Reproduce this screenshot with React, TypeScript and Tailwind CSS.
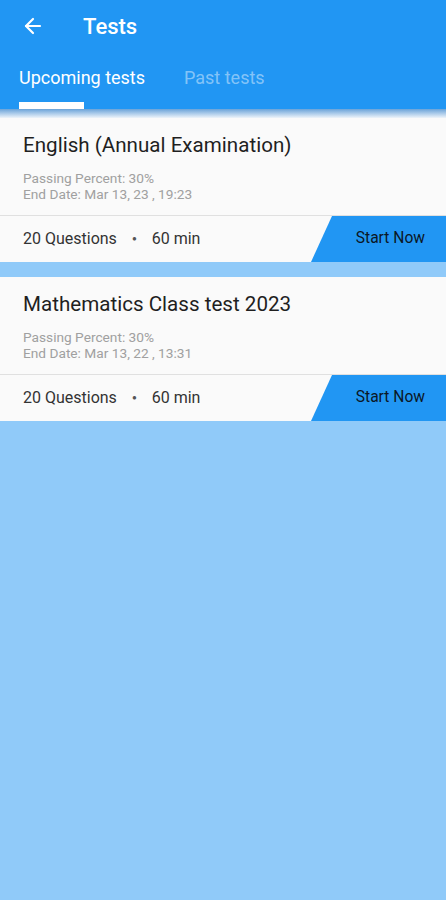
import { ArrowLeft } from "lucide-react";

type Test = {
  title: string;
  passing: string;
  endDate: string;
  questions: number;
  minutes: number;
};

const tests: Test[] = [
  {
    title: "English (Annual Examination)",
    passing: "30%",
    endDate: "Mar 13, 23 , 19:23",
    questions: 20,
    minutes: 60,
  },
  {
    title: "Mathematics Class test 2023",
    passing: "30%",
    endDate: "Mar 13, 22 , 13:31",
    questions: 20,
    minutes: 60,
  },
];

function TestCard({ t }: { t: Test }) {
  return (
    <div className="bg-[#fafafa]">
      <div className="px-[23px] pt-[14px] pb-[13px]">
        <div className="text-[20.6px] leading-[26px] text-[#1f1f1f]">{t.title}</div>
        <div className="mt-[12px] text-[13.7px] leading-[16px] text-[#a0a0a0]">
          <div>Passing Percent: {t.passing}</div>
          <div>End Date: {t.endDate}</div>
        </div>
      </div>
      <div className="h-px bg-[#e0e0e0]" />
      <div className="flex h-[46px] items-center">
        <div className="flex flex-1 items-center pl-[23px] text-[16px] text-[#333]">
          <span>{t.questions} Questions</span>
          <span className="mx-[15px] text-[8px] text-[#555]">●</span>
          <span>{t.minutes} min</span>
        </div>
        <button
          className="flex h-full w-[135px] items-center justify-end bg-[#2196f3] pr-[21px] text-[15.6px] text-[#0b1726]"
          style={{ clipPath: "polygon(21px 0, 100% 0, 100% 100%, 0 100%)" }}
        >
          Start Now
        </button>
      </div>
    </div>
  );
}

export default function App() {
  return (
    <div className="flex min-h-[900px] flex-col bg-[#90caf9] font-['Roboto',sans-serif]">
      <div className="bg-[#2196f3]">
        <div className="flex h-[52px] items-center">
          <ArrowLeft className="ml-[21px] h-[24px] w-[24px] text-white" strokeWidth={2.2} />
          <div className="ml-[38px] text-[22px] font-medium text-white">Tests</div>
        </div>
        <div className="flex h-[57px] pl-[19px]">
          <div className="flex w-[128px] flex-col">
            <div className="flex flex-1 items-center whitespace-nowrap text-[18px] text-white">Upcoming tests</div>
            <div className="h-[7px] w-[65px] bg-white" />
          </div>
          <div className="ml-[37px] flex items-center whitespace-nowrap pb-[7px] text-[18px] text-white/45">Past tests</div>
        </div>
      </div>
      <div className="h-[9px] bg-gradient-to-b from-[#6aa3d8] to-[#eef4fa]" />
      <TestCard t={tests[0]} />
      <div className="h-[15px]" />
      <TestCard t={tests[1]} />
    </div>
  );
}
